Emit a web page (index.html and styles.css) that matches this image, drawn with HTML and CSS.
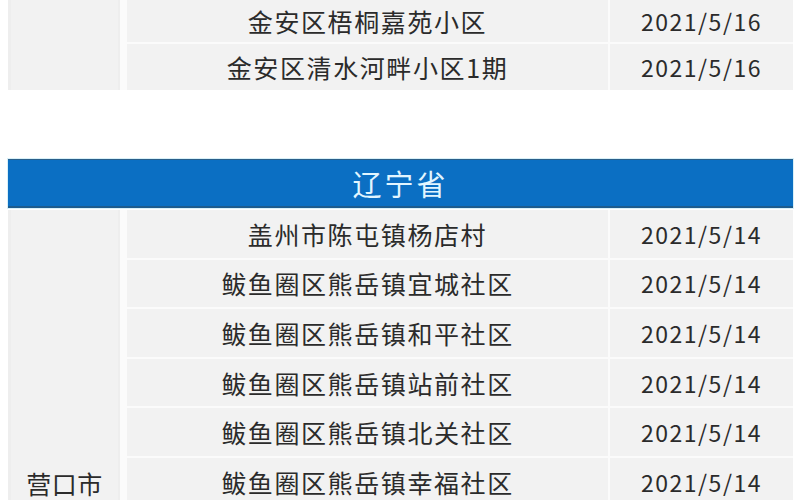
FILE: index.html
```html
<!DOCTYPE html>
<html lang="zh-CN">
<head>
<meta charset="utf-8">
<link rel="stylesheet" href="styles.css">
</head>
<body>
<div class="page">
  <div class="table top">
    <div class="city span2"></div>
    <div class="addr">金安区梧桐嘉苑小区</div>
    <div class="date">2021/5/16</div>
    <div class="addr">金安区清水河畔小区1期</div>
    <div class="date">2021/5/16</div>
  </div>

  <div class="province">辽宁省</div>

  <div class="table bottom">
    <div class="city span6"><span class="city-name">营口市</span></div>
    <div class="addr">盖州市陈屯镇杨店村</div>
    <div class="date">2021/5/14</div>
    <div class="addr">鲅鱼圈区熊岳镇宜城社区</div>
    <div class="date">2021/5/14</div>
    <div class="addr">鲅鱼圈区熊岳镇和平社区</div>
    <div class="date">2021/5/14</div>
    <div class="addr">鲅鱼圈区熊岳镇站前社区</div>
    <div class="date">2021/5/14</div>
    <div class="addr">鲅鱼圈区熊岳镇北关社区</div>
    <div class="date">2021/5/14</div>
    <div class="addr">鲅鱼圈区熊岳镇幸福社区</div>
    <div class="date">2021/5/14</div>
  </div>
</div>
</body>
</html>
```

FILE: styles.css
```css
html, body {
  margin: 0;
  padding: 0;
  background: #ffffff;
  overflow: hidden;
}

.page {
  width: 800px;
  height: 500px;
  overflow: hidden;
  padding: 0 7px 0 8px;
  box-sizing: border-box;
  font-family: "Noto Sans CJK SC", "Noto Sans", sans-serif;
  color: #2b2b2b;
}

.table {
  display: grid;
  grid-template-columns: 117px 481px 1fr;
  column-gap: 2px;
  row-gap: 2px;
  background: #fbfbfb;
}

.top {
  margin-top: -1px;
  grid-template-rows: 43px 46px;
}

.bottom {
  grid-template-rows: repeat(6, 47.6px);
}

.table > div {
  background: #f2f2f2;
  display: flex;
  align-items: center;
  justify-content: center;
  white-space: nowrap;
}

.city {
  margin-right: 5px;
  font-size: 25px;
  letter-spacing: 0.5px;
  border-left: 3px solid #eeeeee;
  border-right: 2px solid #eeeeee;
}

.span2 {
  grid-row: 1 / span 2;
}

.table > .span6 {
  grid-row: 1 / span 6;
  align-items: flex-end;
}

.city-name {
  line-height: 36px;
  padding-bottom: 5px;
}

.addr {
  font-size: 25px;
  letter-spacing: 1.6px;
}

.date {
  font-size: 23px;
  letter-spacing: 1.5px;
}

.province {
  margin-top: 69px;
  margin-bottom: 2px;
  height: 49px;
  box-sizing: border-box;
  background: #0b6fc3;
  border-top: 1px solid #2a5f8a;
  border-bottom: 2px solid #1d5c8e;
  color: #e2f6ff;
  font-size: 29px;
  letter-spacing: 3px;
  display: flex;
  align-items: center;
  justify-content: center;
  box-shadow: 0 0 0 1px #d8f0f8;
}
```
